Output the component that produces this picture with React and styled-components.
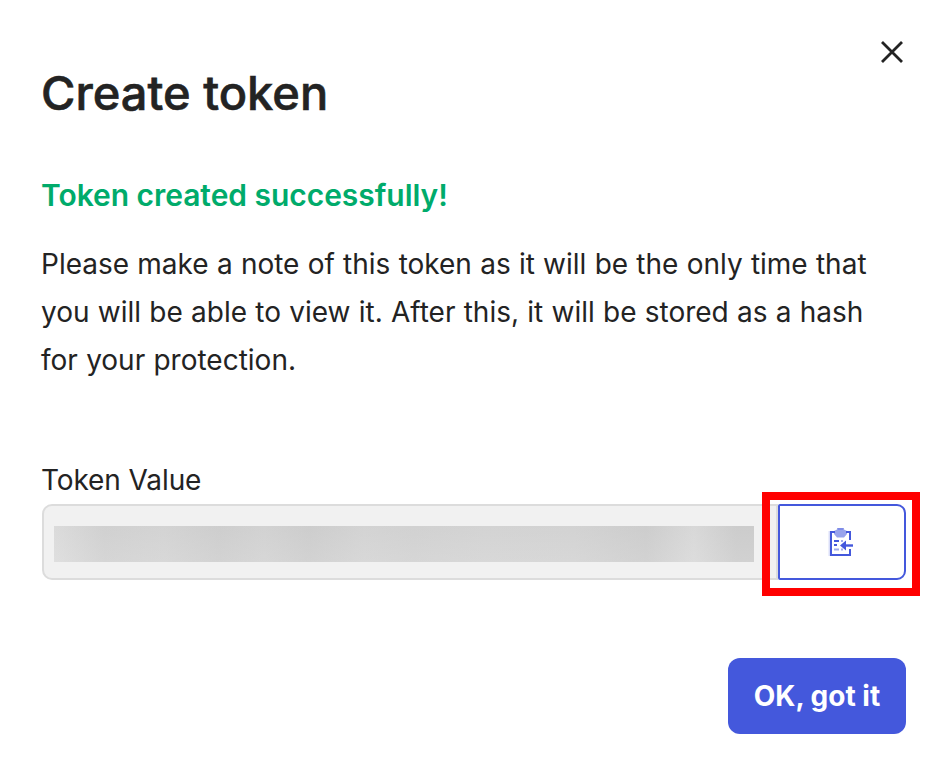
import React from "react";
import styled, { createGlobalStyle } from "styled-components";

const GlobalStyle = createGlobalStyle`
  * { box-sizing: border-box; }
  body { margin: 0; background: #fff; }
`;

const Dialog = styled.section`
  position: relative;
  width: 940px;
  height: 762px;
  padding: 63px 34px 28px 41px;
  display: flex;
  flex-direction: column;
  background: #fff;
  color: #232323;
  font-family: "Inter", sans-serif;
`;

const CloseButton = styled.button`
  position: absolute;
  top: 32px;
  right: 28px;
  width: 40px;
  height: 40px;
  padding: 0;
  border: 0;
  background: none;
  color: #232323;
  svg { display: block; }
`;

const Title = styled.h1`
  margin: 0;
  font-size: 47px;
  line-height: 60px;
  font-weight: 500;
  white-space: nowrap;
  -webkit-text-stroke: 0.6px currentColor;
`;

const Success = styled.h2`
  margin: 52px 0 0;
  font-size: 30px;
  line-height: 40px;
  font-weight: 600;
  letter-spacing: -0.04px;
  color: #00ab6b;
  white-space: nowrap;
`;

const Message = styled.p`
  margin: 25px 0 0;
  font-size: 28px;
  line-height: 48px;
  word-spacing: 0.38px;
  white-space: nowrap;
`;

const Label = styled.label`
  margin-top: 77px;
  height: 39px;
  font-size: 28px;
  line-height: 39px;
  letter-spacing: -0.1px;
`;

const Field = styled.div`
  display: flex;
  height: 76px;
  margin: 4px 0 0 1px;
  width: 864px;
`;

const TokenBox = styled.div`
  flex: 1;
  display: flex;
  align-items: center;
  padding: 4px 22px 0 10px;
  border: 2px solid #dcdcdc;
  border-radius: 10px 0 0 10px;
  background: #f1f1f1;
`;

const Redacted = styled.div`
  width: 700px;
  height: 36px;
  background:
    linear-gradient(to bottom, rgba(211, 211, 211, 0.3), rgba(225, 225, 225, 0.35)),
    linear-gradient(to right, #dedede 0, #cfcfcf 50px, #d3d3d3 110px, #cbcbcb 165px, #d1d1d1 210px,
      #cacaca 255px, #d3d3d3 310px, #d0d0d0 360px, #d3d3d3 430px, #d2d2d2 520px, #cacaca 592px,
      #dadada 640px, #c9c9c9 682px, #c9c9c9 100%);
`;

const CopyButton = styled.button`
  position: relative;
  width: 128px;
  padding: 0;
  border: 2px solid #4458dc;
  border-radius: 2px 9px 9px 2px;
  background: #fff;
  color: #4458dc;
  svg { position: absolute; left: 47px; top: 20px; }
`;

const Highlight = styled.span`
  position: absolute;
  inset: -14px -16px -18px -18px;
  border: 8px solid #f00;
  pointer-events: none;
`;

const Footer = styled.footer`
  display: flex;
  width: 865px;
  margin-top: 78px;
  justify-content: flex-end;
`;

const PrimaryButton = styled.button`
  width: 178px;
  height: 76px;
  padding: 0;
  border: 0;
  border-radius: 12px;
  background: #4458dc;
  color: #fff;
  font: 700 28px/76px "Inter", sans-serif;
  white-space: nowrap;
`;

function CloseIcon() {
  return (
    <svg width="40" height="40" viewBox="0 0 40 40" fill="none" stroke="currentColor" strokeWidth="2.8">
      <path d="M10 10l20 20M30 10L10 30" />
    </svg>
  );
}

function ClipboardIcon() {
  return (
    <svg width="28" height="32" viewBox="0 0 28 32" fill="none" stroke="currentColor" strokeWidth="2">
      <path d="M23 14V6h-4M8 6H4v23h19v-6" />
      <path d="M2.500 5v25" strokeOpacity=".2" />
      <path d="M7 5l3-1.500V2h7v1.500L20 5v3l-3 3.500h-7L7 8z" fill="currentColor" fillOpacity=".55" stroke="none" />
      <path d="M11 3h5" strokeOpacity=".3" />
      <path d="M7 15h5M7 19h3" />
      <path d="M14 15h2M7 23.500h5M14 23.500h2" strokeOpacity=".5" />
      <path d="M26 19.500H15" strokeWidth="2.4" />
      <path d="M19 14.500v10l-6-5z" fill="currentColor" stroke="none" />
    </svg>
  );
}

export default function App() {
  return (
    <>
      <GlobalStyle />
      <Dialog role="dialog">
        <CloseButton aria-label="Close"><CloseIcon /></CloseButton>
        <Title>Create token</Title>
        <Success>Token created successfully!</Success>
        <Message>
          Please make a note of this token as it will be the only time that<br />
          you will be able to view it. After this, it will be stored as a hash<br />
          for your protection.
        </Message>
        <Label>Token Value</Label>
        <Field>
          <TokenBox><Redacted /></TokenBox>
          <CopyButton aria-label="Copy token">
            <ClipboardIcon />
            <Highlight />
          </CopyButton>
        </Field>
        <Footer><PrimaryButton>OK, got it</PrimaryButton></Footer>
      </Dialog>
    </>
  );
}
